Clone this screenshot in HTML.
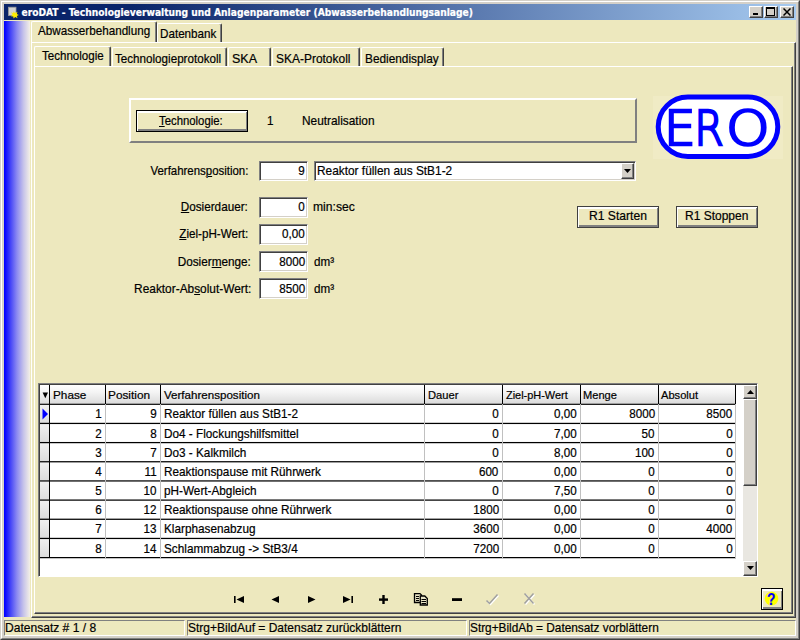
<!DOCTYPE html>
<html><head><meta charset="utf-8"><title>eroDAT</title>
<style>
html,body{margin:0;padding:0;}
body{width:800px;height:640px;position:relative;overflow:hidden;background:#d4d0c8;font-family:"Liberation Sans",sans-serif;font-size:12.2px;color:#000;}
.a{position:absolute;box-sizing:border-box;}
.t{position:absolute;white-space:nowrap;line-height:14px;height:14px;-webkit-text-stroke:0.2px;}
u{text-decoration:underline;text-underline-offset:1px;text-decoration-thickness:1px;}
:root{--bg:#ede8be;}
#f1{left:0;top:0;width:800px;height:640px;border:1px solid;border-color:#d4d0c8 #404040 #404040 #d4d0c8;}
#f2{left:1px;top:1px;width:798px;height:638px;border:1px solid;border-color:#fff #808080 #808080 #fff;}
#title{left:4px;top:4px;width:792px;height:16px;background:linear-gradient(90deg,#0a246a 0%,#0a246a 16%,#a6caf0 100%);}
#ttext{left:21.5px;top:6px;color:#fff;font-family:"DejaVu Sans Condensed","DejaVu Sans","Liberation Sans",sans-serif;font-weight:bold;font-size:10.17px;line-height:14px;}
.tb{top:6px;width:14px;height:12px;background:#d4d0c8;border:1px solid;border-color:#fff #404040 #404040 #fff;box-shadow:inset -1px -1px 0 #808080;}
#client{left:4px;top:20px;width:792px;height:616px;background:var(--bg);}
#strip{left:4px;top:21px;width:26px;height:596px;background:linear-gradient(90deg,#0000ff 0%,#0404ff 3%,#4444f8 25%,#8c8af1 50%,#c6c3ea 75%,#f2eee6 99%);}
.panel{background:var(--bg);border:1px solid;border-color:#fff #404040 #404040 #fff;box-shadow:inset -1px -1px 0 #808080;}
.tab{background:var(--bg);border:1px solid #fff;border-right-color:#404040;border-bottom:none;border-radius:2px 2px 0 0;box-shadow:inset -1px 0 0 #808080;}
.edit{background:#fff;border:1px solid;border-color:#808080 #fff #fff #808080;box-shadow:inset 1px 1px 0 #404040, inset -1px -1px 0 #d4d0c8;}
.btn{background:var(--bg);border:1px solid #404040;box-shadow:inset 1px 1px 0 #fff, inset -1px -2px 0 #808080, inset 0 2px 0 #fff;}
.hc{background:linear-gradient(180deg,#ffffff 0%,#f4f4f4 40%,#dcdcdc 100%);}
.ic{background:linear-gradient(180deg,#f0f0f0 0%,#dcdcdc 100%);}
.sb{background:#d4d0c8;border:1px solid;border-color:#fff #404040 #404040 #fff;box-shadow:inset -1px -1px 0 #808080;}
.st{border:1px solid;border-color:#808080 #fff #fff #808080;}
</style></head><body>
<div class="a" id="f1"></div><div class="a" id="f2"></div>
<div class="a" id="title"></div>
<!-- app icon -->
<svg class="a" style="left:7px;top:6px" width="14" height="14" viewBox="0 0 14 14"><rect x="1.500" y="1.200" width="7.500" height="8.300" fill="#d2d2d2" stroke="#9a9a9a" stroke-width="0.800"/><path d="M4 6 L6 7.500 L6.800 5.300 L8 7.300 L10.500 5.800 L9.800 8 L11.800 9 L9.800 10 L10.500 12.200 L8.200 11 L6.500 12.500 L6.300 10.500 L3.800 10.200 L5.500 8.800 Z" fill="#ffee00"/></svg>
<div class="t" id="ttext">eroDAT - Technologieverwaltung und Anlagenparameter (Abwasserbehandlungsanlage)</div>
<div class="a tb" style="left:749px"><div class="a" style="left:3px;top:6px;width:5px;height:2px;background:#000"></div></div>
<div class="a tb" style="left:764px"><div class="a" style="left:1px;top:0px;width:9px;height:9px;border:1px solid #000;border-top-width:2px"></div></div>
<div class="a tb" style="left:780px"><svg class="a" style="left:2px;top:1px" width="8" height="8" viewBox="0 0 8 8"><path d="M0.5 0.5 L7.5 7.5 M7.5 0.5 L0.5 7.5" stroke="#000" stroke-width="1.5"/></svg></div>
<div class="a" id="client"></div>
<div class="a" id="strip"></div>

<!-- outer tab control -->
<div class="a panel" style="left:31px;top:42px;width:765px;height:576px"></div>
<div class="a tab" style="left:157px;top:23px;width:65px;height:19px"></div>
<div class="a tab" style="left:31px;top:21px;width:126px;height:21px"></div>

<!-- inner tab control -->
<div class="a panel" style="left:34px;top:66px;width:759px;height:548px"></div>
<div class="a tab" style="left:112px;top:47px;width:115px;height:19px"></div>
<div class="a tab" style="left:228px;top:47px;width:43px;height:19px"></div>
<div class="a tab" style="left:272px;top:47px;width:88px;height:19px"></div>
<div class="a tab" style="left:361px;top:47px;width:83px;height:19px"></div>
<div class="a tab" style="left:34px;top:46px;width:77px;height:20px"></div>

<!-- technologie panel -->
<div class="a" style="left:129px;top:98px;width:508px;height:45px;border:2px solid;border-color:#fff #808080 #808080 #fff"></div>
<div class="a btn" style="left:136px;top:110px;width:112px;height:22px;border-color:#000"></div>

<!-- logo -->
<div class="a" style="left:653px;top:96px;width:130px;height:63px;background:#f0ebc5"></div>
<svg class="a" style="left:653px;top:92px" width="132" height="70" viewBox="0 0 132 70">
<rect x="5.2" y="5" width="119.6" height="59.4" rx="29.7" ry="29.7" fill="#fff" stroke="#0000ff" stroke-width="5"/>
<g font-family="DejaVu Sans, Liberation Sans, sans-serif" font-weight="200" font-size="48.500" fill="#0000ff" stroke="#0000ff" stroke-width="2.500">
<text transform="translate(11,53.3) scale(1.03,1)">E</text>
<text transform="translate(41.3,53.3) scale(0.87,1)">R</text>
<text transform="translate(73.1,53.3) scale(1.145,1)">O</text>
</g>
</svg>

<!-- edits -->
<div class="a edit" style="left:259px;top:161px;width:49px;height:20px"></div>
<div class="a edit" style="left:314px;top:161px;width:322px;height:20px"></div>
<div class="a sb" style="left:621px;top:163px;width:13px;height:16px"><svg class="a" style="left:2px;top:5px" width="7" height="4" viewBox="0 0 7 4"><path d="M0 0 L7 0 L3.5 4 Z" fill="#000"/></svg></div>
<div class="a edit" style="left:259px;top:197px;width:49px;height:21px"></div>
<div class="a edit" style="left:259px;top:224px;width:49px;height:21px"></div>
<div class="a edit" style="left:259px;top:251px;width:49px;height:21px"></div>
<div class="a edit" style="left:259px;top:278px;width:49px;height:21px"></div>

<!-- buttons -->
<div class="a btn" style="left:577px;top:206px;width:82px;height:22px"></div>
<div class="a btn" style="left:676px;top:206px;width:82px;height:22px"></div>

<!-- grid -->
<div class="a" style="left:38px;top:383px;width:720px;height:194px;background:#fff;border:1px solid;border-color:#808080 #fff #fff #808080;box-shadow:inset 1px 1px 0 #404040"></div>
<div class="a hc" style="left:40px;top:385px;width:9px;height:18px"></div>
<div class="a hc" style="left:50px;top:385px;width:55px;height:18px"></div>
<div class="a hc" style="left:106px;top:385px;width:54px;height:18px"></div>
<div class="a hc" style="left:161px;top:385px;width:263px;height:18px"></div>
<div class="a hc" style="left:425px;top:385px;width:77px;height:18px"></div>
<div class="a hc" style="left:503px;top:385px;width:77px;height:18px"></div>
<div class="a hc" style="left:581px;top:385px;width:77px;height:18px"></div>
<div class="a hc" style="left:659px;top:385px;width:76px;height:18px"></div>
<div class="a ic" style="left:40px;top:405px;width:9px;height:18px"></div>
<div class="a ic" style="left:40px;top:424px;width:9px;height:18px"></div>
<div class="a ic" style="left:40px;top:443px;width:9px;height:18px"></div>
<div class="a ic" style="left:40px;top:462px;width:9px;height:18px"></div>
<div class="a ic" style="left:40px;top:481px;width:9px;height:19px"></div>
<div class="a ic" style="left:40px;top:501px;width:9px;height:18px"></div>
<div class="a ic" style="left:40px;top:520px;width:9px;height:18px"></div>
<div class="a ic" style="left:40px;top:539px;width:9px;height:18px"></div>
<div class="a" style="left:40px;top:403px;width:696px;height:1px;background:rgba(0,0,0,0.38)"></div>
<div class="a" style="left:40px;top:404px;width:696px;height:1px;background:rgba(0,0,0,0.88)"></div>
<div class="a" style="left:40px;top:422px;width:696px;height:1px;background:rgba(0,0,0,0.20)"></div>
<div class="a" style="left:40px;top:423px;width:696px;height:1px;background:rgba(0,0,0,1.00)"></div>
<div class="a" style="left:40px;top:424px;width:696px;height:1px;background:rgba(0,0,0,0.05)"></div>
<div class="a" style="left:40px;top:441px;width:696px;height:1px;background:rgba(0,0,0,0.03)"></div>
<div class="a" style="left:40px;top:442px;width:696px;height:1px;background:rgba(0,0,0,1.00)"></div>
<div class="a" style="left:40px;top:443px;width:696px;height:1px;background:rgba(0,0,0,0.22)"></div>
<div class="a" style="left:40px;top:461px;width:696px;height:1px;background:rgba(0,0,0,0.87)"></div>
<div class="a" style="left:40px;top:462px;width:696px;height:1px;background:rgba(0,0,0,0.38)"></div>
<div class="a" style="left:40px;top:480px;width:696px;height:1px;background:rgba(0,0,0,0.69)"></div>
<div class="a" style="left:40px;top:481px;width:696px;height:1px;background:rgba(0,0,0,0.56)"></div>
<div class="a" style="left:40px;top:499px;width:696px;height:1px;background:rgba(0,0,0,0.52)"></div>
<div class="a" style="left:40px;top:500px;width:696px;height:1px;background:rgba(0,0,0,0.73)"></div>
<div class="a" style="left:40px;top:518px;width:696px;height:1px;background:rgba(0,0,0,0.36)"></div>
<div class="a" style="left:40px;top:519px;width:696px;height:1px;background:rgba(0,0,0,0.89)"></div>
<div class="a" style="left:40px;top:537px;width:696px;height:1px;background:rgba(0,0,0,0.18)"></div>
<div class="a" style="left:40px;top:538px;width:696px;height:1px;background:rgba(0,0,0,1.00)"></div>
<div class="a" style="left:40px;top:539px;width:696px;height:1px;background:rgba(0,0,0,0.07)"></div>
<div class="a" style="left:40px;top:557px;width:696px;height:1px;background:rgba(0,0,0,1.00)"></div>
<div class="a" style="left:40px;top:558px;width:696px;height:1px;background:rgba(0,0,0,0.24)"></div>
<div class="a" style="left:49px;top:385px;width:1px;height:19px;background:#000"></div>
<div class="a" style="left:49px;top:404px;width:1px;height:154px;background:#000"></div>
<div class="a" style="left:105px;top:385px;width:1px;height:19px;background:#000"></div>
<div class="a" style="left:105px;top:404px;width:1px;height:154px;background:#c0c0c0"></div>
<div class="a" style="left:160px;top:385px;width:1px;height:19px;background:#000"></div>
<div class="a" style="left:160px;top:404px;width:1px;height:154px;background:#c0c0c0"></div>
<div class="a" style="left:424px;top:385px;width:1px;height:19px;background:#000"></div>
<div class="a" style="left:424px;top:404px;width:1px;height:154px;background:#c0c0c0"></div>
<div class="a" style="left:502px;top:385px;width:1px;height:19px;background:#000"></div>
<div class="a" style="left:502px;top:404px;width:1px;height:154px;background:#c0c0c0"></div>
<div class="a" style="left:580px;top:385px;width:1px;height:19px;background:#000"></div>
<div class="a" style="left:580px;top:404px;width:1px;height:154px;background:#c0c0c0"></div>
<div class="a" style="left:658px;top:385px;width:1px;height:19px;background:#000"></div>
<div class="a" style="left:658px;top:404px;width:1px;height:154px;background:#c0c0c0"></div>
<div class="a" style="left:735px;top:385px;width:1px;height:19px;background:#000"></div>
<div class="a" style="left:735px;top:404px;width:1px;height:154px;background:#c0c0c0"></div>

<!-- row indicator / header arrow -->
<svg class="a" style="left:42px;top:392px" width="8" height="8" viewBox="0 0 8 8"><path d="M0.6 0.6 L6 0.6 L3.3 6.3 Z" fill="#000"/></svg>
<svg class="a" style="left:42px;top:408px" width="7" height="12" viewBox="0 0 7 12"><path d="M0.5 0.5 L6 6 L0.5 11.5 Z" fill="#0000ff"/></svg>
<!-- scrollbar -->
<div class="a" style="left:743px;top:385px;width:14px;height:191px;background:#e9e7e1"></div>
<div class="a sb" style="left:743px;top:385px;width:14px;height:14px"><svg class="a" style="left:3px;top:4px" width="7" height="4" viewBox="0 0 7 4"><path d="M3.5 0 L7 4 L0 4 Z" fill="#000"/></svg></div>
<div class="a sb" style="left:743px;top:399px;width:14px;height:87px"></div>
<div class="a sb" style="left:743px;top:561px;width:14px;height:15px"><svg class="a" style="left:3px;top:4px" width="7" height="4" viewBox="0 0 7 4"><path d="M0 0 L7 0 L3.5 4 Z" fill="#000"/></svg></div>

<!-- navigator -->
<svg class="a" style="left:230px;top:590px" width="320" height="20" viewBox="0 0 320 20">
<g fill="#000">
<rect x="4" y="6" width="1.6" height="7"/><path d="M14 6 L14 13 L6.5 9.5 Z"/>
<path d="M49 6 L49 13 L41.5 9.5 Z"/>
<path d="M78 6 L78 13 L85.5 9.5 Z"/>
<path d="M113 6 L113 13 L120.5 9.5 Z"/><rect x="121.4" y="6" width="1.6" height="7"/>
<rect x="149" y="8.4" width="9" height="2.4"/><rect x="152.3" y="5" width="2.4" height="9"/>
<rect x="222" y="8.2" width="10" height="2.8"/>
</g>
<!-- copy icon -->
<g stroke="#000" stroke-width="1.3" fill="#e6e2c4">
<path d="M184.5 3.600 h5.500 l1.500 1.500 v7.400 h-7 z"/>
<path d="M190.300 6 h4.500 l2.500 2.500 v6.500 h-7 z"/>
</g>
<g stroke="#000" stroke-width="1"><path d="M186 6.500 h3 M186 8.500 h3 M186 10.500 h3 M191.500 9.500 h4.500 M191.500 11.500 h4.500 M191.500 13.500 h4.500"/></g>
<!-- disabled check -->
<path d="M257.5 11.500 l3 3 l8 -9" stroke="#fff" stroke-width="1.500" fill="none"/>
<path d="M256.500 10.500 l3 3 l8 -9" stroke="#a0a0a0" stroke-width="1.500" fill="none"/>
<path d="M295.500 4.500 l9 10 M304.500 4.500 l-9 10" stroke="#fff" stroke-width="1.500" fill="none"/>
<path d="M294.500 3.500 l9 10 M303.500 3.500 l-9 10" stroke="#a0a0a0" stroke-width="1.500" fill="none"/>
</svg>

<!-- help button -->
<div class="a" style="left:761px;top:588px;width:22px;height:22px;background:var(--bg);border:1px solid #000;box-shadow:inset 0 2px 0 #fff, inset 1px 0 0 #fff, inset -1px -2px 0 #808080"></div>
<svg class="a" style="left:762px;top:589px" width="20" height="20" viewBox="0 0 20 20"><circle cx="9.500" cy="9.650" r="6.800" fill="#ffff00"/></svg>
<span class="t" style="left:767.4px;top:591px;font-weight:bold;font-size:16px;color:#0000ff;line-height:18px;height:18px;transform:scaleX(0.86);transform-origin:0 0">?</span>

<!-- status bar -->
<div class="a st" style="left:4px;top:620px;width:181px;height:16px"></div>
<div class="a st" style="left:187px;top:620px;width:280px;height:16px"></div>
<div class="a st" style="left:469px;top:620px;width:327px;height:16px"></div>

<span class="t" style="left:37.98px;top:24.09px;transform:scaleX(0.9568);transform-origin:0 0">Abwasserbehandlung</span>
<span class="t" style="left:159.94px;top:27.29px;transform:scaleX(0.9564);transform-origin:0 0">Datenbank</span>
<span class="t" style="left:41.74px;top:48.99px;transform:scaleX(0.9482);transform-origin:0 0">Technologie</span>
<span class="t" style="left:114.74px;top:51.69px;transform:scaleX(0.9552);transform-origin:0 0">Technologieprotokoll</span>
<span class="t" style="left:232.23px;top:51.69px;transform:scaleX(1.0258);transform-origin:0 0">SKA</span>
<span class="t" style="left:276.21px;top:51.69px;transform:scaleX(0.9816);transform-origin:0 0">SKA-Protokoll</span>
<span class="t" style="left:364.53px;top:51.69px;transform:scaleX(0.9701);transform-origin:0 0">Bediendisplay</span>
<span class="t" style="left:159.49px;top:113.99px;transform:scaleX(0.9311);transform-origin:0 0"><u>T</u>echnologie:</span>
<span class="t" style="left:267.20px;top:113.59px;transform:scaleX(0.9550);transform-origin:0 0">1</span>
<span class="t" style="left:302.03px;top:113.59px;transform:scaleX(0.9725);transform-origin:0 0">Neutralisation</span>
<span class="t" style="right:551.96px;top:164.09px;transform:scaleX(0.9379);transform-origin:100% 0">Verfahrens<u>p</u>osition:</span>
<span class="t" style="right:551.93px;top:199.79px;transform:scaleX(0.9597);transform-origin:100% 0"><u>D</u>osierdauer:</span>
<span class="t" style="right:551.94px;top:227.49px;transform:scaleX(0.9540);transform-origin:100% 0"><u>Z</u>iel-pH-Wert:</span>
<span class="t" style="right:548.92px;top:254.99px;transform:scaleX(0.9650);transform-origin:100% 0">Dosier<u>m</u>enge:</span>
<span class="t" style="right:548.91px;top:281.99px;transform:scaleX(0.9742);transform-origin:100% 0">Reaktor-Ab<u>s</u>olut-Wert:</span>
<span class="t" style="right:495.00px;top:164.09px;transform:scaleX(0.9550);transform-origin:100% 0">9</span>
<span class="t" style="right:495.00px;top:200.09px;transform:scaleX(0.9550);transform-origin:100% 0">0</span>
<span class="t" style="right:495.00px;top:227.49px;transform:scaleX(0.9550);transform-origin:100% 0">0,00</span>
<span class="t" style="right:495.00px;top:254.99px;transform:scaleX(0.9550);transform-origin:100% 0">8000</span>
<span class="t" style="right:495.00px;top:281.99px;transform:scaleX(0.9550);transform-origin:100% 0">8500</span>
<span class="t" style="left:316.53px;top:164.19px;transform:scaleX(0.9734);transform-origin:0 0">Reaktor füllen aus StB1-2</span>
<span class="t" style="left:312.94px;top:199.99px;transform:scaleX(0.9963);transform-origin:0 0">min:sec</span>
<span class="t" style="left:313.75px;top:254.99px;transform:scaleX(0.9550);transform-origin:0 0">dm³</span>
<span class="t" style="left:313.75px;top:281.99px;transform:scaleX(0.9550);transform-origin:0 0">dm³</span>
<span class="t" style="left:588.50px;top:209.39px;transform:scaleX(0.9942);transform-origin:0 0">R1 Starten</span>
<span class="t" style="left:685.02px;top:209.39px;transform:scaleX(0.9833);transform-origin:0 0">R1 Stoppen</span>
<span class="t" style="left:5.01px;top:621.29px;transform:scaleX(0.9890);transform-origin:0 0">Datensatz # 1 / 8</span>
<span class="t" style="left:187.75px;top:621.29px;transform:scaleX(0.9840);transform-origin:0 0">Strg+BildAuf = Datensatz zurückblättern</span>
<span class="t" style="left:469.91px;top:621.29px;transform:scaleX(0.9706);transform-origin:0 0">Strg+BildAb = Datensatz vorblättern</span>
<span class="t" style="left:52.54px;top:388.00px;transform:scaleX(1.0688);transform-origin:0 0;font-size:11px">Phase</span>
<span class="t" style="left:107.63px;top:388.00px;transform:scaleX(1.0742);transform-origin:0 0;font-size:11px">Position</span>
<span class="t" style="left:163.85px;top:388.00px;transform:scaleX(1.0521);transform-origin:0 0;font-size:11px">Verfahrensposition</span>
<span class="t" style="left:427.59px;top:388.00px;transform:scaleX(1.0130);transform-origin:0 0;font-size:11px">Dauer</span>
<span class="t" style="left:505.65px;top:388.00px;transform:scaleX(0.9935);transform-origin:0 0;font-size:11px">Ziel-pH-Wert</span>
<span class="t" style="left:582.84px;top:388.00px;transform:scaleX(1.0080);transform-origin:0 0;font-size:11px">Menge</span>
<span class="t" style="left:661.23px;top:388.00px;transform:scaleX(1.0113);transform-origin:0 0;font-size:11px">Absolut</span>
<span class="t" style="right:698.20px;top:407.44px;transform:scaleX(0.9550);transform-origin:100% 0">1</span>
<span class="t" style="right:643.20px;top:407.44px;transform:scaleX(0.9550);transform-origin:100% 0">9</span>
<span class="t" style="left:163.90px;top:407.44px;transform:scaleX(0.9650);transform-origin:0 0">Reaktor füllen aus StB1-2</span>
<span class="t" style="right:301.20px;top:407.44px;transform:scaleX(0.9550);transform-origin:100% 0">0</span>
<span class="t" style="right:223.20px;top:407.44px;transform:scaleX(0.9550);transform-origin:100% 0">0,00</span>
<span class="t" style="right:145.20px;top:407.44px;transform:scaleX(0.9550);transform-origin:100% 0">8000</span>
<span class="t" style="right:67.40px;top:407.44px;transform:scaleX(0.9550);transform-origin:100% 0">8500</span>
<span class="t" style="right:698.20px;top:426.61px;transform:scaleX(0.9550);transform-origin:100% 0">2</span>
<span class="t" style="right:643.20px;top:426.61px;transform:scaleX(0.9550);transform-origin:100% 0">8</span>
<span class="t" style="left:163.90px;top:426.61px;transform:scaleX(0.9650);transform-origin:0 0">Do4 - Flockungshilfsmittel</span>
<span class="t" style="right:301.20px;top:426.61px;transform:scaleX(0.9550);transform-origin:100% 0">0</span>
<span class="t" style="right:223.20px;top:426.61px;transform:scaleX(0.9550);transform-origin:100% 0">7,00</span>
<span class="t" style="right:145.20px;top:426.61px;transform:scaleX(0.9550);transform-origin:100% 0">50</span>
<span class="t" style="right:67.40px;top:426.61px;transform:scaleX(0.9550);transform-origin:100% 0">0</span>
<span class="t" style="right:698.20px;top:445.78px;transform:scaleX(0.9550);transform-origin:100% 0">3</span>
<span class="t" style="right:643.20px;top:445.78px;transform:scaleX(0.9550);transform-origin:100% 0">7</span>
<span class="t" style="left:163.90px;top:445.78px;transform:scaleX(0.9650);transform-origin:0 0">Do3 - Kalkmilch</span>
<span class="t" style="right:301.20px;top:445.78px;transform:scaleX(0.9550);transform-origin:100% 0">0</span>
<span class="t" style="right:223.20px;top:445.78px;transform:scaleX(0.9550);transform-origin:100% 0">8,00</span>
<span class="t" style="right:145.20px;top:445.78px;transform:scaleX(0.9550);transform-origin:100% 0">100</span>
<span class="t" style="right:67.40px;top:445.78px;transform:scaleX(0.9550);transform-origin:100% 0">0</span>
<span class="t" style="right:698.20px;top:464.95px;transform:scaleX(0.9550);transform-origin:100% 0">4</span>
<span class="t" style="right:643.20px;top:464.95px;transform:scaleX(0.9550);transform-origin:100% 0">11</span>
<span class="t" style="left:163.90px;top:464.95px;transform:scaleX(0.9650);transform-origin:0 0">Reaktionspause mit Rührwerk</span>
<span class="t" style="right:301.20px;top:464.95px;transform:scaleX(0.9550);transform-origin:100% 0">600</span>
<span class="t" style="right:223.20px;top:464.95px;transform:scaleX(0.9550);transform-origin:100% 0">0,00</span>
<span class="t" style="right:145.20px;top:464.95px;transform:scaleX(0.9550);transform-origin:100% 0">0</span>
<span class="t" style="right:67.40px;top:464.95px;transform:scaleX(0.9550);transform-origin:100% 0">0</span>
<span class="t" style="right:698.20px;top:484.12px;transform:scaleX(0.9550);transform-origin:100% 0">5</span>
<span class="t" style="right:643.20px;top:484.12px;transform:scaleX(0.9550);transform-origin:100% 0">10</span>
<span class="t" style="left:163.90px;top:484.12px;transform:scaleX(0.9650);transform-origin:0 0">pH-Wert-Abgleich</span>
<span class="t" style="right:301.20px;top:484.12px;transform:scaleX(0.9550);transform-origin:100% 0">0</span>
<span class="t" style="right:223.20px;top:484.12px;transform:scaleX(0.9550);transform-origin:100% 0">7,50</span>
<span class="t" style="right:145.20px;top:484.12px;transform:scaleX(0.9550);transform-origin:100% 0">0</span>
<span class="t" style="right:67.40px;top:484.12px;transform:scaleX(0.9550);transform-origin:100% 0">0</span>
<span class="t" style="right:698.20px;top:503.29px;transform:scaleX(0.9550);transform-origin:100% 0">6</span>
<span class="t" style="right:643.20px;top:503.29px;transform:scaleX(0.9550);transform-origin:100% 0">12</span>
<span class="t" style="left:163.90px;top:503.29px;transform:scaleX(0.9650);transform-origin:0 0">Reaktionspause ohne Rührwerk</span>
<span class="t" style="right:301.20px;top:503.29px;transform:scaleX(0.9550);transform-origin:100% 0">1800</span>
<span class="t" style="right:223.20px;top:503.29px;transform:scaleX(0.9550);transform-origin:100% 0">0,00</span>
<span class="t" style="right:145.20px;top:503.29px;transform:scaleX(0.9550);transform-origin:100% 0">0</span>
<span class="t" style="right:67.40px;top:503.29px;transform:scaleX(0.9550);transform-origin:100% 0">0</span>
<span class="t" style="right:698.20px;top:522.46px;transform:scaleX(0.9550);transform-origin:100% 0">7</span>
<span class="t" style="right:643.20px;top:522.46px;transform:scaleX(0.9550);transform-origin:100% 0">13</span>
<span class="t" style="left:163.90px;top:522.46px;transform:scaleX(0.9650);transform-origin:0 0">Klarphasenabzug</span>
<span class="t" style="right:301.20px;top:522.46px;transform:scaleX(0.9550);transform-origin:100% 0">3600</span>
<span class="t" style="right:223.20px;top:522.46px;transform:scaleX(0.9550);transform-origin:100% 0">0,00</span>
<span class="t" style="right:145.20px;top:522.46px;transform:scaleX(0.9550);transform-origin:100% 0">0</span>
<span class="t" style="right:67.40px;top:522.46px;transform:scaleX(0.9550);transform-origin:100% 0">4000</span>
<span class="t" style="right:698.20px;top:541.63px;transform:scaleX(0.9550);transform-origin:100% 0">8</span>
<span class="t" style="right:643.20px;top:541.63px;transform:scaleX(0.9550);transform-origin:100% 0">14</span>
<span class="t" style="left:163.90px;top:541.63px;transform:scaleX(0.9650);transform-origin:0 0">Schlammabzug -&gt; StB3/4</span>
<span class="t" style="right:301.20px;top:541.63px;transform:scaleX(0.9550);transform-origin:100% 0">7200</span>
<span class="t" style="right:223.20px;top:541.63px;transform:scaleX(0.9550);transform-origin:100% 0">0,00</span>
<span class="t" style="right:145.20px;top:541.63px;transform:scaleX(0.9550);transform-origin:100% 0">0</span>
<span class="t" style="right:67.40px;top:541.63px;transform:scaleX(0.9550);transform-origin:100% 0">0</span>
</body></html>
